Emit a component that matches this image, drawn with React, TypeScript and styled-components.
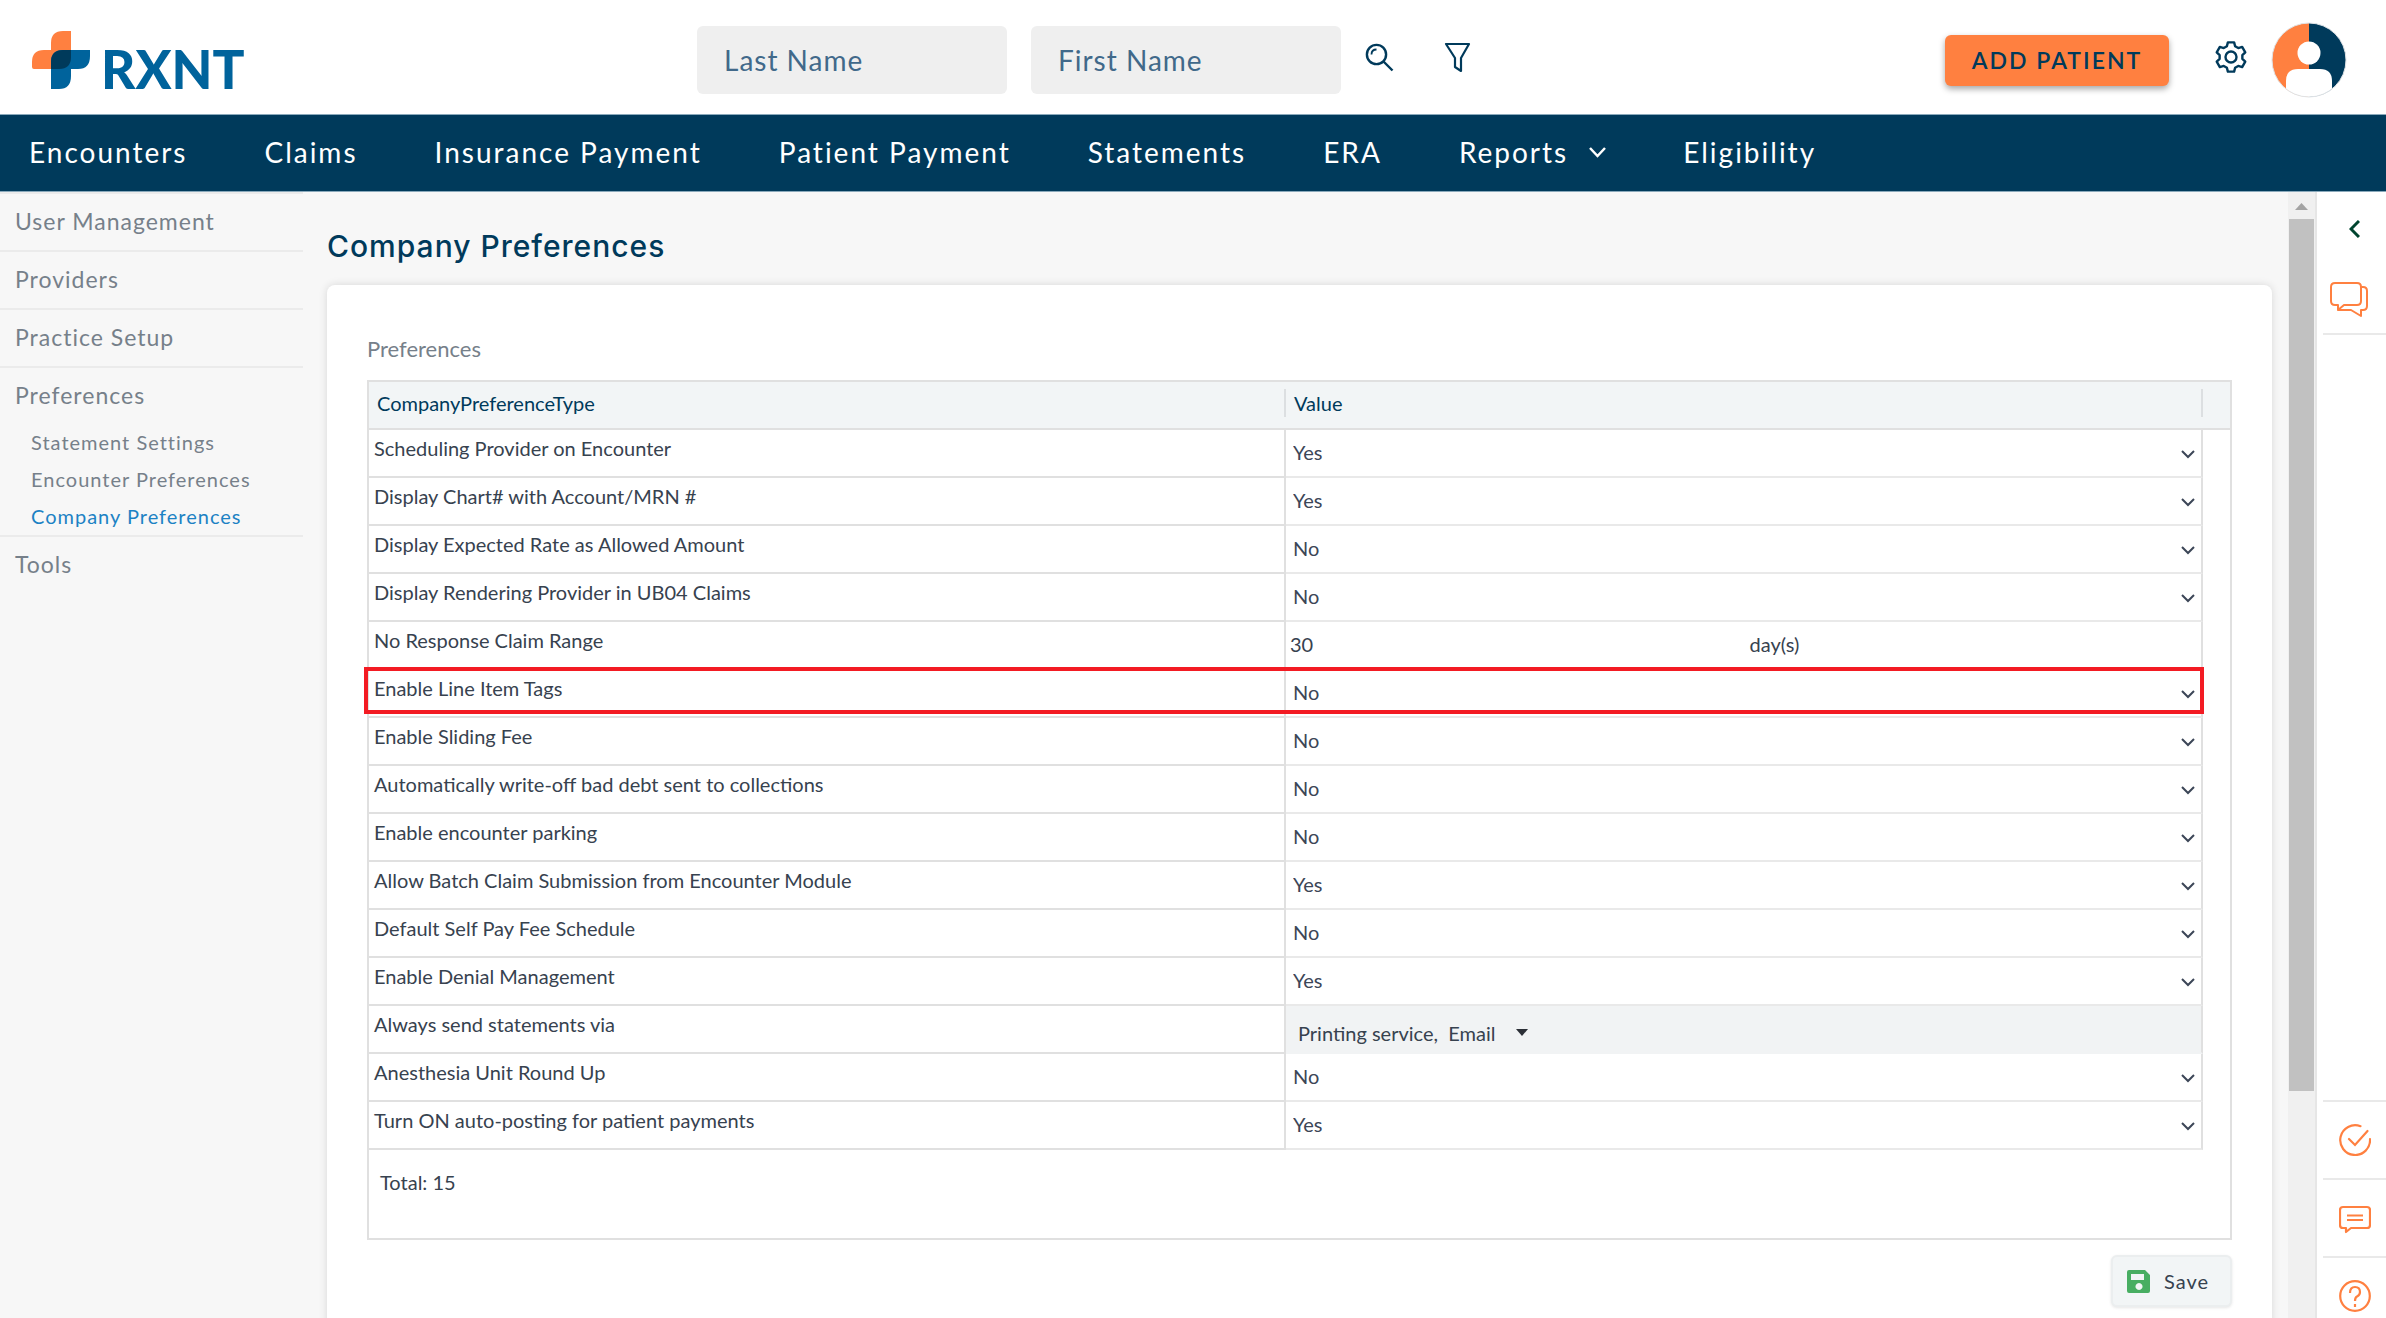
import React from "react";
import styled, { createGlobalStyle } from "styled-components";

const navy = "#003a5b";
const orange = "#ff8040";
const line = "#e0e0e0";
const softLine = "#e9e9e9";

const GlobalStyle = createGlobalStyle`
  *, *::before, *::after { box-sizing: border-box; }
  html, body, #root { height: 100%; }
  body { margin: 0; overflow: hidden; background: #fff; font-family: Lato, "Open Sans", sans-serif; color: #37424f; }
  button, input, select { font: inherit; color: inherit; }
  svg { display: block; }
`;

const Page = styled.div`
  display: flex;
  flex-direction: column;
  height: 100%;
`;

const TopBar = styled.header`
  display: grid;
  grid-template-columns: 697px 1fr auto;
  align-items: center;
  flex: none;
  height: 115px;
  border-bottom: 1px solid #8aa9bb;
  padding-right: 39px;
`;

const LogoLink = styled.a`
  display: block;
  padding: 4px 0 0 31px;
  text-decoration: none;
`;

const Search = styled.form`
  display: flex;
  align-items: center;
  padding-top: 6px;
`;

const SearchField = styled.input`
  width: 310px;
  height: 68px;
  margin-right: 24px;
  padding: 0 27px;
  border: 0;
  border-radius: 6px;
  background: #efefef;
  color: #41698a;
  font-size: 28px;
  letter-spacing: 1px;
  &::placeholder { color: #41698a; opacity: 1; }
`;

const IconButton = styled.button<{ $gap?: number; $raised?: boolean }>`
  display: flex;
  padding: 0 0 ${(p) => (p.$raised ? 6 : 0)}px;
  margin-right: ${(p) => p.$gap || 0}px;
  border: 0;
  background: none;
  color: ${navy};
`;

const Actions = styled.div`
  display: flex;
  align-items: center;
  padding-top: 6px;
`;

const AddPatient = styled.button`
  width: 224px;
  height: 51px;
  margin-right: 46px;
  border: 0;
  border-radius: 6px;
  background: ${orange};
  box-shadow: 0 3px 6px rgba(0, 0, 0, 0.35);
  color: ${navy};
  font-size: 23px;
  font-weight: 600;
  letter-spacing: 2px;
`;

const NavBar = styled.nav`
  display: flex;
  align-items: center;
  flex: none;
  gap: 77px;
  height: 77px;
  padding: 0 0 2px 29px;
  background: ${navy};
  border-bottom: 1px solid #8aa9bb;
`;

const NavLink = styled.a`
  display: flex;
  align-items: center;
  gap: 21px;
  color: #fff;
  font-size: 28px;
  letter-spacing: 2px;
  text-decoration: none;
`;

const Body = styled.div`
  display: flex;
  flex: 1;
  min-height: 0;
  background: #f7f7f7;
`;

const Side = styled.aside`
  flex: none;
  width: 303px;
  border-top: 2px solid #ebebeb;
`;

const SideGroup = styled.section`
  border-bottom: 2px solid #ebebeb;
  &:last-child { border-bottom: 0; }
`;

const SideLink = styled.a`
  display: block;
  padding: 0 15px 2px;
  color: #76808a;
  font-size: 23px;
  line-height: 54px;
  letter-spacing: 1px;
  text-decoration: none;
`;

const SubLink = styled.a<{ $active?: boolean }>`
  display: block;
  padding-left: 31px;
  color: ${(p) => (p.$active ? "#1c82c4" : "#76808a")};
  font-size: 20px;
  line-height: 37px;
  letter-spacing: 1px;
  text-decoration: none;
`;

const Main = styled.main`
  flex: 1;
  min-width: 0;
  padding: 0 16px 0 24px;
  overflow: hidden;
`;

const Title = styled.h1`
  margin: 0;
  padding: 34px 0 19px;
  color: ${navy};
  font-family: Inter, "Noto Sans", sans-serif;
  font-size: 30px;
  font-weight: 500;
  line-height: 40px;
  letter-spacing: 1px;
`;

const Card = styled.section`
  height: 1100px;
  padding: 49px 40px;
  border-radius: 8px;
  background: #fff;
  box-shadow: 0 0 8px rgba(0, 0, 0, 0.13);
`;

const Caption = styled.h2`
  margin: 0 0 16px;
  color: #76808a;
  font-size: 22px;
  font-weight: 400;
  line-height: 30px;
`;

const Grid = styled.div`
  border: 2px solid ${line};
`;

const Table = styled.table`
  width: 100%;
  border-collapse: separate;
  border-spacing: 0;
  table-layout: fixed;
  font-size: 20px;
`;

const FillerCol = styled.col`
  width: 27px;
`;

const Head = styled.th`
  height: 48px;
  padding: 0 0 4px;
  border-bottom: 2px solid ${line};
  background: #f2f5f6;
  color: ${navy};
  font-weight: 400;
  text-align: left;
`;

const HeadLabel = styled.span`
  display: block;
  padding-left: 8px;
  border-right: 2px solid #dcdfe1;
  line-height: 28px;
`;

const NameCell = styled.td<{ $marked?: boolean }>`
  height: 48px;
  padding: 1px 5px 11px;
  border-right: 2px solid ${line};
  border-bottom: 2px solid ${line};
  line-height: 34px;
  ${(p) =>
    p.$marked &&
    `&::after {
       content: "";
       position: absolute;
       inset: -3px 26px 4px -5px;
       border: 4px solid #f31b23;
       pointer-events: none;
     }`}
`;

const ValueCell = styled.td<{ $shaded?: boolean }>`
  height: 48px;
  padding: 0;
  border-right: 2px solid ${line};
  border-bottom: 2px solid ${(p) => (p.$shaded ? "#f1f3f4" : softLine)};
  background: ${(p) => (p.$shaded ? "#f1f3f4" : "#fff")};
`;

const Row = styled.tr`
  position: relative;
`;

const SelectBox = styled.label`
  display: grid;
  grid-template-columns: 1fr 28px;
  align-items: center;
  color: #3c4657;
`;

const Select = styled.select`
  grid-area: 1 / 1 / 2 / 3;
  width: 100%;
  height: 46px;
  padding: 0 7px 2px;
  border: 0;
  background: transparent;
  appearance: none;
`;

const Chevron = styled.svg`
  grid-area: 1 / 2;
  margin-top: 3px;
  margin-left: 8px;
  pointer-events: none;
`;

const DayField = styled.label`
  display: grid;
  grid-template-columns: 1fr 1fr;
  align-items: center;
`;

const DayInput = styled.input`
  width: 100%;
  height: 46px;
  padding: 0 4px 2px;
  border: 0;
  background: transparent;
`;

const DayUnit = styled.span`
  padding: 0 6px 2px;
`;

const MultiButton = styled.button`
  display: flex;
  align-items: center;
  gap: 21px;
  width: 100%;
  height: 46px;
  padding: 7px 12px 0;
  border: 0;
  background: transparent;
  white-space: pre;
`;

const Total = styled.p`
  margin: 0;
  padding: 16px 11px 40px;
  font-size: 20px;
  line-height: 32px;
`;

const Footer = styled.div`
  display: flex;
  justify-content: flex-end;
  padding-top: 15px;
`;

const Save = styled.button`
  display: flex;
  align-items: center;
  gap: 14px;
  width: 121px;
  height: 52px;
  padding: 0 14px;
  border: 2px solid #ebeeef;
  border-radius: 6px;
  background: #f2f5f6;
  box-shadow: 0 1px 3px rgba(0, 0, 0, 0.1);
  font-size: 20px;
  letter-spacing: 1px;
`;

const ScrollTrack = styled.div`
  display: flex;
  flex: none;
  flex-direction: column;
  align-items: center;
  width: 29px;
  border-right: 2px solid #e6e6e6;
  background: #f0f0f0;
`;

const ScrollThumb = styled.div`
  width: 25px;
  height: 872px;
  background: #c1c1c1;
`;

const Rail = styled.aside`
  display: flex;
  flex: none;
  flex-direction: column;
  width: 69px;
  padding-left: 6px;
  background: #fff;
`;

const RailButton = styled.button<{ $height: number; $top?: boolean; $bottom?: boolean; $wide?: boolean; $color?: string }>`
  display: flex;
  align-items: center;
  justify-content: center;
  flex: none;
  height: ${(p) => p.$height}px;
  padding: 0 ${(p) => (p.$wide ? 12 : 0)}px 0 0;
  border: 0 solid #e9e9e9;
  border-top-width: ${(p) => (p.$top ? 2 : 0)}px;
  border-bottom-width: ${(p) => (p.$bottom ? 2 : 0)}px;
  background: none;
  color: ${(p) => p.$color || orange};
`;

const RailSpace = styled.div`
  flex: none;
  height: 765px;
`;

const navItems = ["Encounters", "Claims", "Insurance Payment", "Patient Payment", "Statements", "ERA", "Reports", "Eligibility"];

type Pref = { name: string; value: string; kind?: "days" | "multi"; marked?: boolean };

const prefs: Pref[] = [
  { name: "Scheduling Provider on Encounter", value: "Yes" },
  { name: "Display Chart# with Account/MRN #", value: "Yes" },
  { name: "Display Expected Rate as Allowed Amount", value: "No" },
  { name: "Display Rendering Provider in UB04 Claims", value: "No" },
  { name: "No Response Claim Range", value: "30", kind: "days" },
  { name: "Enable Line Item Tags", value: "No", marked: true },
  { name: "Enable Sliding Fee", value: "No" },
  { name: "Automatically write-off bad debt sent to collections", value: "No" },
  { name: "Enable encounter parking", value: "No" },
  { name: "Allow Batch Claim Submission from Encounter Module", value: "Yes" },
  { name: "Default Self Pay Fee Schedule", value: "No" },
  { name: "Enable Denial Management", value: "Yes" },
  { name: "Always send statements via", value: "Printing service,  Email", kind: "multi" },
  { name: "Anesthesia Unit Round Up", value: "No" },
  { name: "Turn ON auto-posting for patient payments", value: "Yes" },
];

const LogoSvg = styled.svg`
  overflow: visible;
`;

const LogoText = styled.text`
  font-family: Lato, sans-serif;
  font-size: 53px;
  font-weight: 900;
`;

function Logo() {
  return (
    <LogoSvg width="230" height="62" viewBox="0 0 230 62" role="img" aria-label="RXNT">
      <path fill={orange} d="M40 3v38H3q-2 0-2-2v-5q0-12 12-12h7v-7Q20 3 32 3z" />
      <path fill="#00639c" d="M32 22h27v6q0 13-12 13h-7v7q0 13-12 13h-8V34q0-12 12-12z" />
      <path fill={navy} d="M32 22h8v7q0 12-12 12h-8v-7q0-12 12-12z" />
      <LogoText x="70" y="61" fill="#00639c">RXNT</LogoText>
    </LogoSvg>
  );
}

/* Six teeth around the hub: two root points and two tip points for each. */
const gearPoints = [0, 1, 2, 3, 4, 5]
  .flatMap((k) =>
    [[-21, 11.5], [-12, 15], [12, 15], [21, 11.5]].map(([offset, radius]) => {
      const angle = ((k * 60 - 90 + offset) * Math.PI) / 180;
      return `${(16 + radius * Math.cos(angle)).toFixed(2)},${(17 + radius * Math.sin(angle)).toFixed(2)}`;
    })
  )
  .join(" ");

function ValueEditor({ pref }: { pref: Pref }) {
  if (pref.kind === "days") {
    return (
      <DayField>
        <DayInput defaultValue={pref.value} aria-label={pref.name} />
        <DayUnit>day(s)</DayUnit>
      </DayField>
    );
  }
  if (pref.kind === "multi") {
    return (
      <MultiButton type="button" aria-label={pref.name}>
        {pref.value}
        <svg width="12" height="7" viewBox="0 0 12 7"><path d="M0 0h12L6 7z" fill="#2b2f36" /></svg>
      </MultiButton>
    );
  }
  return (
    <SelectBox>
      <Select defaultValue={pref.value} aria-label={pref.name}>
        <option>Yes</option>
        <option>No</option>
      </Select>
      <Chevron width="14" height="9" viewBox="0 0 14 9" fill="none" stroke="currentColor" strokeWidth="2">
        <path d="M1 1l6 6 6-6" />
      </Chevron>
    </SelectBox>
  );
}

export default function App() {
  return (
    <Page>
      <GlobalStyle />
      <TopBar>
        <LogoLink href="#"><Logo /></LogoLink>
        <Search>
          <SearchField placeholder="Last Name" aria-label="Last Name" />
          <SearchField placeholder="First Name" aria-label="First Name" />
          <IconButton type="button" aria-label="Search" $gap={50} $raised>
            <svg width="29" height="29" viewBox="0 0 29 29" fill="none" stroke="currentColor" strokeWidth="2.4">
              <circle cx="11.5" cy="11.5" r="9.6" /><path d="M18.500 18.500l9 9" /><path d="M6.500 11.500q0-5 5-5" strokeWidth="1.800" />
            </svg>
          </IconButton>
          <IconButton type="button" aria-label="Filter" $raised>
            <svg width="27" height="31" viewBox="0 0 27 31" fill="none" stroke="currentColor" strokeWidth="2.2" strokeLinejoin="round">
              <path d="M2 2h23l-8 14v13l-6-4v-9z" />
            </svg>
          </IconButton>
        </Search>
        <Actions>
          <AddPatient type="button">ADD PATIENT</AddPatient>
          <IconButton type="button" aria-label="Settings" $gap={24} $raised>
            <svg width="32" height="34" viewBox="0 0 32 34" fill="none" stroke="currentColor" strokeWidth="2.4" strokeLinejoin="round">
              <polygon points={gearPoints} />
              <circle cx="16" cy="17" r="5.500" />
            </svg>
          </IconButton>
          <IconButton type="button" aria-label="Account">
            <svg width="76" height="76" viewBox="0 0 76 76">
              <clipPath id="avatar"><circle cx="38" cy="38" r="37" /></clipPath>
              <g clipPath="url(#avatar)">
                <path fill={orange} d="M0 0h38v76H0z" />
                <path fill={navy} d="M38 0h38v76H38z" />
                <circle cx="38" cy="31" r="11.500" fill="#fff" />
                <path fill="#fff" d="M15 76V59q0-12 12-12h22q12 0 12 12v17z" />
              </g>
              <circle cx="38" cy="38" r="37" fill="none" stroke="#dfe3e6" />
            </svg>
          </IconButton>
        </Actions>
      </TopBar>
      <NavBar>
        {navItems.map((item) => (
          <NavLink href="#" key={item}>
            {item}
            {item === "Reports" && (
              <svg width="17" height="11" viewBox="0 0 17 11" fill="none" stroke="currentColor" strokeWidth="2.500">
                <path d="M1 1l7.500 8L16 1" />
              </svg>
            )}
          </NavLink>
        ))}
      </NavBar>
      <Body>
        <Side>
          <SideGroup><SideLink href="#">User Management</SideLink></SideGroup>
          <SideGroup><SideLink href="#">Providers</SideLink></SideGroup>
          <SideGroup><SideLink href="#">Practice Setup</SideLink></SideGroup>
          <SideGroup>
            <SideLink href="#">Preferences</SideLink>
            <SubLink href="#">Statement Settings</SubLink>
            <SubLink href="#">Encounter Preferences</SubLink>
            <SubLink href="#" $active>Company Preferences</SubLink>
          </SideGroup>
          <SideGroup><SideLink href="#">Tools</SideLink></SideGroup>
        </Side>
        <Main>
          <Title>Company Preferences</Title>
          <Card>
            <Caption>Preferences</Caption>
            <Grid>
              <Table>
                <colgroup><col /><col /><FillerCol /></colgroup>
                <thead>
                  <tr>
                    <Head scope="col"><HeadLabel>CompanyPreferenceType</HeadLabel></Head>
                    <Head scope="col"><HeadLabel>Value</HeadLabel></Head>
                    <Head as="td" />
                  </tr>
                </thead>
                <tbody>
                  {prefs.map((pref) => (
                    <Row key={pref.name}>
                      <NameCell $marked={pref.marked}>{pref.name}</NameCell>
                      <ValueCell $shaded={pref.kind === "multi"}><ValueEditor pref={pref} /></ValueCell>
                      <td />
                    </Row>
                  ))}
                </tbody>
              </Table>
              <Total>Total: 15</Total>
            </Grid>
            <Footer>
              <Save type="button">
                <svg width="23" height="23" viewBox="0 0 23 23">
                  <path fillRule="evenodd" fill="#48ae62" d="M2 0h16l5 5v16a2 2 0 0 1-2 2H2a2 2 0 0 1-2-2V2a2 2 0 0 1 2-2zm2 4v6h13V4zm8 9a3.500 3.500 0 1 0 .01 0z" />
                </svg>
                Save
              </Save>
            </Footer>
          </Card>
        </Main>
        <ScrollTrack>
          <svg width="13" height="27" viewBox="0 0 13 27"><path d="M0 18h13l-6.500-7z" fill="#a3a3a3" /></svg>
          <ScrollThumb />
        </ScrollTrack>
        <Rail>
          <RailButton type="button" aria-label="Collapse" $height={74} $color="#00442f">
            <svg width="11" height="18" viewBox="0 0 11 18" fill="none" stroke="currentColor" strokeWidth="3"><path d="M10 1L2 9l8 8" /></svg>
          </RailButton>
          <RailButton type="button" aria-label="Messages" $height={69} $bottom $wide>
            <svg width="38" height="36" viewBox="0 0 38 36" fill="none" stroke="currentColor" strokeWidth="2" strokeLinejoin="round">
              <path d="M5 1h22q4 0 4 4v14q0 4-4 4H14l-6 5v-5H5q-4 0-4-4V5q0-4 4-4z" />
              <path d="M31 5h2q4 0 4 4v15q0 4-4 4h-2v6l-10-6H8" />
            </svg>
          </RailButton>
          <RailSpace />
          <RailButton type="button" aria-label="Tasks" $height={78} $top>
            <svg width="32" height="32" viewBox="0 0 32 32" fill="none" stroke="currentColor" strokeWidth="2.200" strokeLinecap="round">
              <path d="M21.500 2.200A14.900 14.900 0 1 0 31 15M10 15l6 6L28.500 7" />
            </svg>
          </RailButton>
          <RailButton type="button" aria-label="Comments" $height={78} $top>
            <svg width="32" height="32" viewBox="0 -4 32 32" fill="none" stroke="currentColor" strokeWidth="2.200" strokeLinejoin="round">
              <path d="M4 1h24q3 0 3 3v15q0 3-3 3H12l-5 4v-4H4q-3 0-3-3V4q0-3 3-3zM8 9.500h16M8 14h16" />
            </svg>
          </RailButton>
          <RailButton type="button" aria-label="Help" $height={78} $top>
            <svg width="32" height="32" viewBox="0 0 32 32" fill="none" stroke="currentColor" strokeWidth="2.200">
              <circle cx="16" cy="16" r="14.800" /><path d="M11 13q0-6 5-6t5 5q0 3-3 4.500-2 1-2 4.500M16 24v3" />
            </svg>
          </RailButton>
        </Rail>
      </Body>
    </Page>
  );
}
